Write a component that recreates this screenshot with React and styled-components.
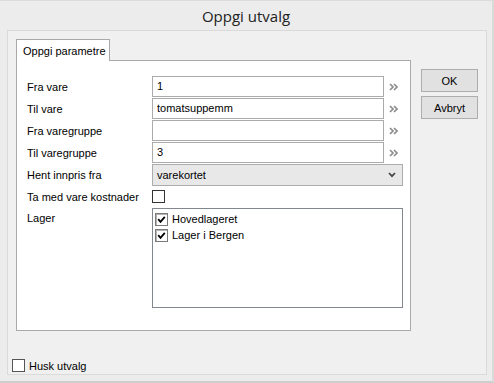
import React from 'react'
import styled, { createGlobalStyle } from 'styled-components'

const GlobalStyle = createGlobalStyle`
  html, body {
    margin: 0;
    padding: 0;
    background: #ececec;
  }
  body {
    font-family: "Liberation Sans", Arial, sans-serif;
    font-size: 11px;
    color: #000;
  }
`;

const fields = [
    { label: 'Fra vare', value: '1' },
    { label: 'Til vare', value: 'tomatsuppemm' },
    { label: 'Fra varegruppe', value: '' },
    { label: 'Til varegruppe', value: '3' },
];

const lagre = ['Hovedlageret', 'Lager i Bergen'];

function Arrows() {
    return (
        <svg width="10" height="8" viewBox="0 0 10 8">
            <path d="M1 1 L4 4 L1 7 M5 1 L8 4 L5 7" fill="none" stroke="#8c8c8c" strokeWidth="1.7" />
        </svg>
    );
}

function Chevron() {
    return (
        <svg width="8" height="6" viewBox="0 0 8 6">
            <path d="M1 1 L4 4.2 L7 1" fill="none" stroke="#444" strokeWidth="1.7" />
        </svg>
    );
}

function Tick() {
    return (
        <svg width="9" height="9" viewBox="0 0 9 9">
            <path d="M1.2 4.2 L3.5 6.8 L7.8 1.8" fill="none" stroke="#000" strokeWidth="1.8" />
        </svg>
    );
}

function App() {
    return (
        <Window>
            <GlobalStyle />
            <Title>Oppgi utvalg</Title>
            <Panel>
                <Main>
                    <TabArea>
                        <TabStrip>
                            <Tab>Oppgi parametre</Tab>
                        </TabStrip>
                        <TabPage>
                            {fields.map(f => (
                                <Row key={f.label}>
                                    <Label>{f.label}</Label>
                                    <Input>{f.value}</Input>
                                    <ArrowCell><Arrows /></ArrowCell>
                                </Row>
                            ))}
                            <Row $h={22} $mb={4}>
                                <Label>Hent innpris fra</Label>
                                <Select>
                                    <span>varekortet</span>
                                    <Chevron />
                                </Select>
                            </Row>
                            <Row $h={13} $mb={5}>
                                <Label>Ta med vare kostnader</Label>
                                <Box $border="#333" />
                            </Row>
                            <ListRow>
                                <Label $top>Lager</Label>
                                <ListBox>
                                    {lagre.map(l => (
                                        <ListItem key={l}>
                                            <Box $border="#7a7a7a" $inner><Tick /></Box>
                                            {l}
                                        </ListItem>
                                    ))}
                                </ListBox>
                            </ListRow>
                        </TabPage>
                    </TabArea>
                    <Buttons>
                        <Button>OK</Button>
                        <Button>Avbryt</Button>
                    </Buttons>
                </Main>
                <Remember>
                    <Box $border="#555" />
                    Husk utvalg
                </Remember>
            </Panel>
        </Window>
    )
}

export default App

const Window = styled.div`
    width: 494px;
    height: 383px;
    box-sizing: border-box;
    border-top: 1px solid #dcdcdc;
    border-right: 2px solid #dadada;
    border-bottom: 2px solid #cfcfcf;
    background: #ececec;
    display: flex;
    flex-direction: column;
`;

const Title = styled.div`
    height: 29px;
    display: flex;
    align-items: center;
    justify-content: center;
    font-family: "Open Sans", "Noto Sans", sans-serif;
    font-size: 15px;
    color: #222;
    padding-top: 1px;
    box-sizing: border-box;
`;

const Panel = styled.div`
    margin: 0 5px 0 7px;
    height: 345px;
    box-sizing: border-box;
    border: 1px solid #dadada;
    background: #f0f0f0;
    display: flex;
    flex-direction: column;
    justify-content: space-between;
    padding: 8px 0 1px 4px;
`;

const Main = styled.div`
    display: flex;
    align-items: flex-start;
    padding-left: 4px;
`;

const TabArea = styled.div`
    display: flex;
    flex-direction: column;
`;

const TabStrip = styled.div`
    display: flex;
    height: 21px;
`;

const Tab = styled.div`
    width: 94px;
    box-sizing: border-box;
    border: 1px solid #a9a9a9;
    border-bottom: none;
    background: #fff;
    padding: 5px 0 0 6px;
    margin-bottom: -1px;
    position: relative;
    z-index: 1;
`;

const TabPage = styled.div`
    width: 395px;
    height: 271px;
    box-sizing: border-box;
    border: 1px solid #a9a9a9;
    background: #fff;
    padding: 15px 0 0 10px;
    display: flex;
    flex-direction: column;
`;

const Row = styled.div`
    display: grid;
    grid-template-columns: 125px 232px 19px;
    align-items: center;
    height: ${p => p.$h || 21}px;
    margin-bottom: ${p => p.$mb ?? 1}px;
`;

const ListRow = styled(Row)`
    align-items: start;
    height: 100px;
`;

const Label = styled.div`
    font-size: 11px;
    padding-top: ${p => (p.$top ? '4px' : '0')};
`;

const Input = styled.div`
    height: 21px;
    box-sizing: border-box;
    border: 1px solid #ababab;
    padding: 3px 4px 0;
    font-size: 11px;
`;

const ArrowCell = styled.div`
    display: flex;
    justify-content: center;
    padding-top: 1px;
`;

const Select = styled.div`
    grid-column: 2 / 4;
    height: 22px;
    box-sizing: border-box;
    border: 1px solid #acacac;
    background: #e8e8e8;
    display: flex;
    align-items: center;
    justify-content: space-between;
    padding: 0 6px 0 4px;
`;

const Box = styled.div`
    width: 13px;
    height: 13px;
    flex: none;
    box-sizing: border-box;
    border: 1px solid ${p => p.$border};
    background: #fff;
    display: flex;
    align-items: center;
    justify-content: center;
    box-shadow: ${p => (p.$inner ? 'inset 1px 1px 0 #b5b5b5' : 'none')};
`;

const ListBox = styled.div`
    grid-column: 2 / 4;
    height: 100px;
    box-sizing: border-box;
    border: 1px solid #828790;
    background: #fff;
    padding: 2px 2px;
`;

const ListItem = styled.div`
    display: flex;
    align-items: center;
    gap: 4px;
    height: 16px;
    font-size: 11px;
`;

const Buttons = styled.div`
    margin: 30px 0 0 10px;
    display: flex;
    flex-direction: column;
    gap: 4px;
`;

const Button = styled.div`
    width: 57px;
    height: 23px;
    box-sizing: border-box;
    border: 1px solid #adadad;
    background: #e1e1e1;
    display: flex;
    align-items: center;
    justify-content: center;
    font-size: 11px;
`;

const Remember = styled.div`
    display: flex;
    align-items: center;
    gap: 4px;
    font-size: 11px;
    padding-bottom: 1px;
`;
